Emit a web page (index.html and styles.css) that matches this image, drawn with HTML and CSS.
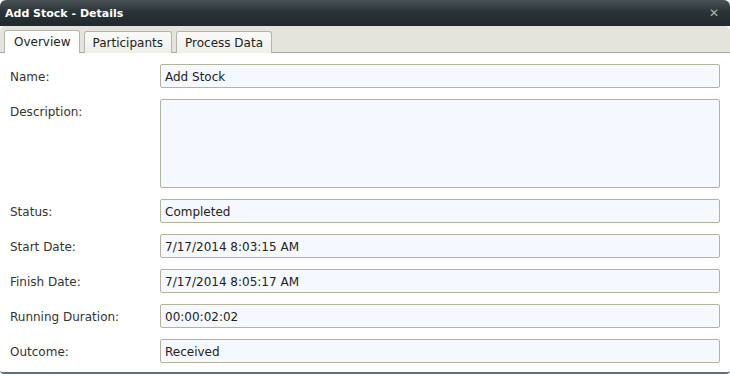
FILE: index.html
```html
<!DOCTYPE html>
<html lang="en">
<head>
    <meta charset="UTF-8">
    <title>Add Stock - Details</title>
    <link rel="stylesheet" href="styles.css">
</head>
<body>

    <div class="window">
        <div class="title-bar">
            <span class="title">Add Stock - Details</span>
            <span class="close">&#x2715;</span>
        </div>

        <div class="tab-strip">
            <div class="tab active">Overview</div>
            <div class="tab">Participants</div>
            <div class="tab">Process Data</div>
        </div>

        <div class="content">
            <div class="row">
                <label>Name:</label>
                <div class="field">Add Stock</div>
            </div>
            <div class="row">
                <label>Description:</label>
                <div class="field area"></div>
            </div>
            <div class="row">
                <label>Status:</label>
                <div class="field">Completed</div>
            </div>
            <div class="row">
                <label>Start Date:</label>
                <div class="field">7/17/2014 8:03:15 AM</div>
            </div>
            <div class="row">
                <label>Finish Date:</label>
                <div class="field">7/17/2014 8:05:17 AM</div>
            </div>
            <div class="row">
                <label>Running Duration:</label>
                <div class="field">00:00:02:02</div>
            </div>
            <div class="row">
                <label>Outcome:</label>
                <div class="field">Received</div>
            </div>
        </div>
    </div>

</body>
</html>
```

FILE: styles.css
```css
body {
    margin: 0;
    background-color: #ffffff;
    font-family: 'DejaVu Sans', Verdana, sans-serif;
    font-size: 12px;
    color: #333333;
}

.window {
    width: 730px;
    height: 374px;
    box-sizing: border-box;
    border-radius: 6px 6px 4px 4px;
    border-bottom: 2px solid #5d707c;
    background-color: #ffffff;
    display: flex;
    flex-direction: column;
    overflow: hidden;
}

.title-bar {
    height: 26px;
    flex-shrink: 0;
    padding: 0 11px 0 5px;
    display: flex;
    align-items: center;
    justify-content: space-between;
    background: linear-gradient(#4a5357, #2b3336 45%, #22292c);
    color: #ffffff;
    font-weight: bold;
    font-size: 11px;
}

.close {
    color: #b0b4b6;
    font-size: 12px;
    font-weight: bold;
}

.tab-strip {
    height: 27px;
    flex-shrink: 0;
    box-sizing: border-box;
    background-color: #e5e4dc;
    border-bottom: 1px solid #a9a99c;
    border-radius: 5px 5px 0 0;
    padding: 4px 0 0 4px;
    display: flex;
    align-items: flex-end;
    gap: 4px;
}

.tab {
    height: 22px;
    box-sizing: border-box;
    padding: 4px 8px 0 8px;
    margin-bottom: -1px;
    border: 1px solid #b4b4aa;
    border-bottom: none;
    border-radius: 3px 3px 0 0;
    background: linear-gradient(#fafafa, #eeeeea);
    color: #222222;
}

.tab.active {
    background: #ffffff;
    height: 23px;
    padding: 4px 8px 0 9px;
}

.content {
    flex: 1;
    background-color: #ffffff;
    padding: 11px 10px 0 10px;
}

.row {
    display: flex;
    margin-bottom: 11px;
}

.row label {
    width: 150px;
    padding-top: 6px;
    color: #333333;
}

.field {
    flex: 1;
    height: 24px;
    box-sizing: border-box;
    padding: 5px 4px 0 4px;
    border: 1px solid #b3b39c;
    border-radius: 2px;
    background-color: #f5f9ff;
    color: #222222;
}

.field.area {
    height: 89px;
}
```
